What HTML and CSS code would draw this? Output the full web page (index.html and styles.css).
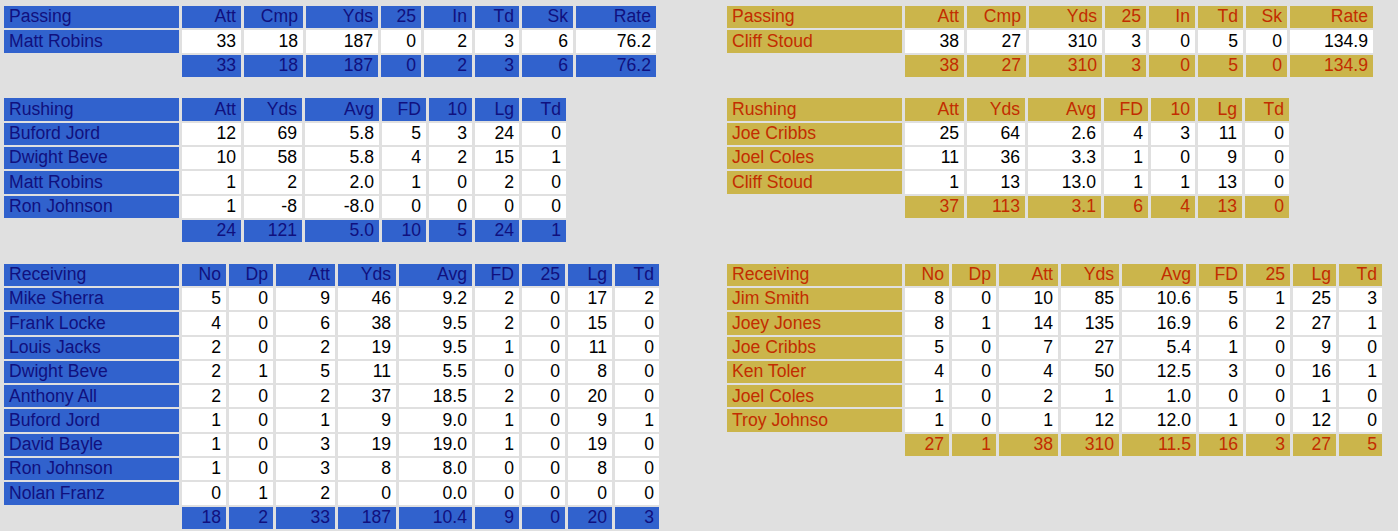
FILE: index.html
```html
<!DOCTYPE html>
<html lang="en">
<head>
<meta charset="utf-8">
<title>Box Score</title>
<link rel="stylesheet" href="styles.css">
</head>
<body>
<main class="board">

  <table class="stats home">
    <colgroup><col class="w175"><col class="w59"><col class="w59"><col class="w72"><col class="w40"><col class="w48"><col class="w44"><col class="w51"><col class="w80"></colgroup>
    <tr class="head"><th>Passing</th><th>Att</th><th>Cmp</th><th>Yds</th><th>25</th><th>In</th><th>Td</th><th>Sk</th><th>Rate</th></tr>
    <tr><th>Matt Robins</th><td>33</td><td>18</td><td>187</td><td>0</td><td>2</td><td>3</td><td>6</td><td>76.2</td></tr>
    <tr class="total"><td class="blank"></td><td>33</td><td>18</td><td>187</td><td>0</td><td>2</td><td>3</td><td>6</td><td>76.2</td></tr>
  </table>

  <table class="stats away">
    <colgroup><col class="w175"><col class="w59"><col class="w59"><col class="w73"><col class="w41"><col class="w46"><col class="w45"><col class="w41"><col class="w83"></colgroup>
    <tr class="head"><th>Passing</th><th>Att</th><th>Cmp</th><th>Yds</th><th>25</th><th>In</th><th>Td</th><th>Sk</th><th>Rate</th></tr>
    <tr><th>Cliff Stoud</th><td>38</td><td>27</td><td>310</td><td>3</td><td>0</td><td>5</td><td>0</td><td>134.9</td></tr>
    <tr class="total"><td class="blank"></td><td>38</td><td>27</td><td>310</td><td>3</td><td>0</td><td>5</td><td>0</td><td>134.9</td></tr>
  </table>

  <table class="stats home">
    <colgroup><col class="w175"><col class="w59"><col class="w58"><col class="w74"><col class="w44"><col class="w43"><col class="w44"><col class="w44"></colgroup>
    <tr class="head"><th>Rushing</th><th>Att</th><th>Yds</th><th>Avg</th><th>FD</th><th>10</th><th>Lg</th><th>Td</th></tr>
    <tr><th>Buford Jord</th><td>12</td><td>69</td><td>5.8</td><td>5</td><td>3</td><td>24</td><td>0</td></tr>
    <tr><th>Dwight Beve</th><td>10</td><td>58</td><td>5.8</td><td>4</td><td>2</td><td>15</td><td>1</td></tr>
    <tr><th>Matt Robins</th><td>1</td><td>2</td><td>2.0</td><td>1</td><td>0</td><td>2</td><td>0</td></tr>
    <tr><th>Ron Johnson</th><td>1</td><td>-8</td><td>-8.0</td><td>0</td><td>0</td><td>0</td><td>0</td></tr>
    <tr class="total"><td class="blank"></td><td>24</td><td>121</td><td>5.0</td><td>10</td><td>5</td><td>24</td><td>1</td></tr>
  </table>

  <table class="stats away">
    <colgroup><col class="w175"><col class="w59"><col class="w58"><col class="w73"><col class="w44"><col class="w44"><col class="w44"><col class="w44"></colgroup>
    <tr class="head"><th>Rushing</th><th>Att</th><th>Yds</th><th>Avg</th><th>FD</th><th>10</th><th>Lg</th><th>Td</th></tr>
    <tr><th>Joe Cribbs</th><td>25</td><td>64</td><td>2.6</td><td>4</td><td>3</td><td>11</td><td>0</td></tr>
    <tr><th>Joel Coles</th><td>11</td><td>36</td><td>3.3</td><td>1</td><td>0</td><td>9</td><td>0</td></tr>
    <tr><th>Cliff Stoud</th><td>1</td><td>13</td><td>13.0</td><td>1</td><td>1</td><td>13</td><td>0</td></tr>
    <tr class="total"><td class="blank"></td><td>37</td><td>113</td><td>3.1</td><td>6</td><td>4</td><td>13</td><td>0</td></tr>
  </table>

  <table class="stats home">
    <colgroup><col class="w175"><col class="w44"><col class="w44"><col class="w59"><col class="w58"><col class="w73"><col class="w44"><col class="w43"><col class="w44"><col class="w44"></colgroup>
    <tr class="head"><th>Receiving</th><th>No</th><th>Dp</th><th>Att</th><th>Yds</th><th>Avg</th><th>FD</th><th>25</th><th>Lg</th><th>Td</th></tr>
    <tr><th>Mike Sherra</th><td>5</td><td>0</td><td>9</td><td>46</td><td>9.2</td><td>2</td><td>0</td><td>17</td><td>2</td></tr>
    <tr><th>Frank Locke</th><td>4</td><td>0</td><td>6</td><td>38</td><td>9.5</td><td>2</td><td>0</td><td>15</td><td>0</td></tr>
    <tr><th>Louis Jacks</th><td>2</td><td>0</td><td>2</td><td>19</td><td>9.5</td><td>1</td><td>0</td><td>11</td><td>0</td></tr>
    <tr><th>Dwight Beve</th><td>2</td><td>1</td><td>5</td><td>11</td><td>5.5</td><td>0</td><td>0</td><td>8</td><td>0</td></tr>
    <tr><th>Anthony All</th><td>2</td><td>0</td><td>2</td><td>37</td><td>18.5</td><td>2</td><td>0</td><td>20</td><td>0</td></tr>
    <tr><th>Buford Jord</th><td>1</td><td>0</td><td>1</td><td>9</td><td>9.0</td><td>1</td><td>0</td><td>9</td><td>1</td></tr>
    <tr><th>David Bayle</th><td>1</td><td>0</td><td>3</td><td>19</td><td>19.0</td><td>1</td><td>0</td><td>19</td><td>0</td></tr>
    <tr><th>Ron Johnson</th><td>1</td><td>0</td><td>3</td><td>8</td><td>8.0</td><td>0</td><td>0</td><td>8</td><td>0</td></tr>
    <tr><th>Nolan Franz</th><td>0</td><td>1</td><td>2</td><td>0</td><td>0.0</td><td>0</td><td>0</td><td>0</td><td>0</td></tr>
    <tr class="total"><td class="blank"></td><td>18</td><td>2</td><td>33</td><td>187</td><td>10.4</td><td>9</td><td>0</td><td>20</td><td>3</td></tr>
  </table>

  <table class="stats away">
    <colgroup><col class="w175"><col class="w44"><col class="w44"><col class="w59"><col class="w58"><col class="w74"><col class="w44"><col class="w44"><col class="w43"><col class="w43"></colgroup>
    <tr class="head"><th>Receiving</th><th>No</th><th>Dp</th><th>Att</th><th>Yds</th><th>Avg</th><th>FD</th><th>25</th><th>Lg</th><th>Td</th></tr>
    <tr><th>Jim Smith</th><td>8</td><td>0</td><td>10</td><td>85</td><td>10.6</td><td>5</td><td>1</td><td>25</td><td>3</td></tr>
    <tr><th>Joey Jones</th><td>8</td><td>1</td><td>14</td><td>135</td><td>16.9</td><td>6</td><td>2</td><td>27</td><td>1</td></tr>
    <tr><th>Joe Cribbs</th><td>5</td><td>0</td><td>7</td><td>27</td><td>5.4</td><td>1</td><td>0</td><td>9</td><td>0</td></tr>
    <tr><th>Ken Toler</th><td>4</td><td>0</td><td>4</td><td>50</td><td>12.5</td><td>3</td><td>0</td><td>16</td><td>1</td></tr>
    <tr><th>Joel Coles</th><td>1</td><td>0</td><td>2</td><td>1</td><td>1.0</td><td>0</td><td>0</td><td>1</td><td>0</td></tr>
    <tr><th>Troy Johnso</th><td>1</td><td>0</td><td>1</td><td>12</td><td>12.0</td><td>1</td><td>0</td><td>12</td><td>0</td></tr>
    <tr class="total"><td class="blank"></td><td>27</td><td>1</td><td>38</td><td>310</td><td>11.5</td><td>16</td><td>3</td><td>27</td><td>5</td></tr>
  </table>

</main>
</body>
</html>
```

FILE: styles.css
```css
html, body {
  margin: 0;
  background: #e0e0e0;
}

.board {
  display: grid;
  grid-template-columns: 723px auto;
  row-gap: 17.5px;
  align-items: start;
  justify-items: start;
  padding: 4px 0 0 1px;
  font-family: "Liberation Sans", Arial, sans-serif;
  font-size: 17.6px;
}

.stats {
  border-collapse: separate;
  border-spacing: 3px 2px;
}

.stats th,
.stats td {
  box-sizing: border-box;
  height: 22.3px;
  padding: 0 5px;
  font-weight: normal;
  line-height: 1;
  text-align: right;
  white-space: nowrap;
  vertical-align: middle;
}

.stats td {
  background: #ffffff;
  color: #000000;
}

.stats tr > th:first-child {
  text-align: left;
}

/* home team: blue */
.home th,
.home .total td {
  background: #3162cd;
  color: #10107e;
}

/* away team: gold */
.away th,
.away .total td {
  background: #cbb54b;
  color: #c22d00;
}

.home .total td.blank,
.away .total td.blank {
  background: transparent;
}

.w175 { width: 175px; }
.w83 { width: 83px; }
.w80 { width: 80px; }
.w74 { width: 74px; }
.w73 { width: 73px; }
.w72 { width: 72px; }
.w59 { width: 59px; }
.w58 { width: 58px; }
.w51 { width: 51px; }
.w48 { width: 48px; }
.w46 { width: 46px; }
.w45 { width: 45px; }
.w44 { width: 44px; }
.w43 { width: 43px; }
.w41 { width: 41px; }
.w40 { width: 40px; }
```
